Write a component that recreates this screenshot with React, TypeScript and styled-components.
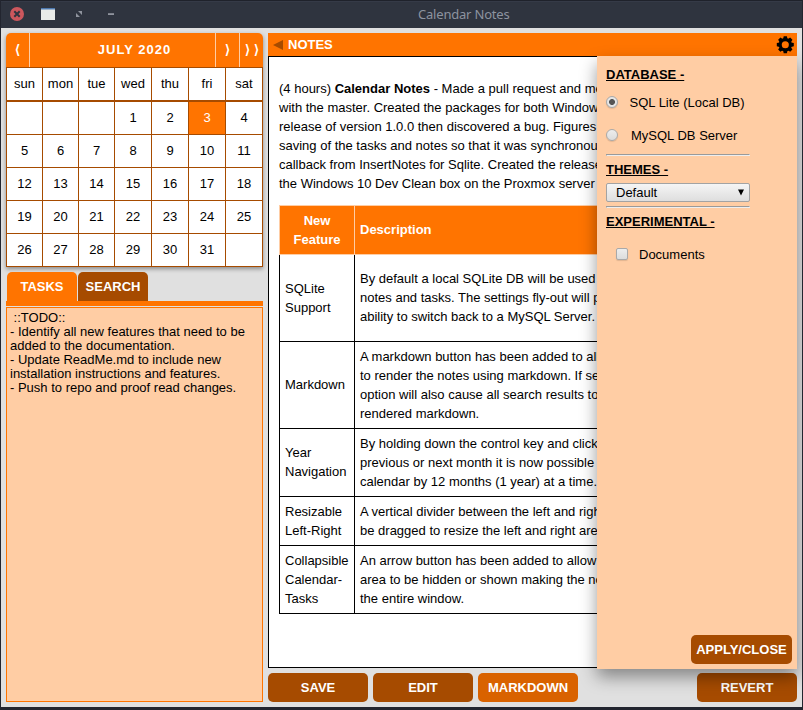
import React from "react";
import styled, { createGlobalStyle } from "styled-components";

const ORANGE = "#ff7400";
const BROWN = "#a64b00";
const PEACH = "#ffcda4";

const GlobalStyle = createGlobalStyle`
  * { box-sizing: border-box; }
  body {
    margin: 0;
    overflow: hidden;
    font: 13px/15px "Liberation Sans", Arial, sans-serif;
    color: #000;
  }
`;

const Window = styled.div`
  width: 803px;
  height: 710px;
  display: flex;
  flex-direction: column;
  background: #e0e0e0;
  border: solid #22252f;
  border-width: 0 1px 3px 1px;
  overflow: hidden;
`;

const TitleBar = styled.header`
  height: 28px;
  flex: none;
  display: grid;
  grid-template-columns: 124px 1fr;
  align-items: center;
  background: #2f343f;
  border-top: 1px solid #1f222b;
  box-shadow: inset 0 1px #353a47;
`;

const WindowControls = styled.svg`
  display: block;
  width: 124px;
  height: 27px;
`;

const WindowTitle = styled.div`
  font: 13px/27px "Noto Sans", sans-serif;
  letter-spacing: -0.2px;
  color: #8d939f;
  padding-left: 293px;
  white-space: nowrap;
`;

const Body = styled.div`
  flex: 1;
  min-height: 0;
  display: grid;
  grid-template-columns: 257px 529px;
  gap: 5px;
  padding: 5px;
`;

const Sidebar = styled.aside`
  display: flex;
  flex-direction: column;
  min-height: 0;
`;

const Calendar = styled.section`
  height: 234px;
  flex: none;
  border-radius: 5px 5px 0 0;
  box-shadow: 0 2px 4px rgba(0, 0, 0, 0.38);
`;

const CalendarHeader = styled.div`
  display: grid;
  grid-template-columns: 23px 1fr 24px 24px;
  height: 34px;
  line-height: 33px;
  background: ${ORANGE};
  color: #fff;
  font-weight: bold;
  text-align: center;
  border-radius: 5px 5px 0 0;
`;

const MonthLabel = styled.div`
  letter-spacing: 1px;
  padding-left: 24px;
  border-left: 1px solid ${PEACH};
`;

const NavButton = styled.div<{ $divided?: boolean; $double?: boolean }>`
  border-left: ${(p) => (p.$divided ? `1px solid ${PEACH}` : "none")};
  letter-spacing: ${(p) => (p.$double ? "4px" : "normal")};
  padding-left: ${(p) => (p.$double ? "4px" : "0")};
  white-space: nowrap;
`;

const DayGrid = styled.div`
  display: grid;
  grid-template-columns: repeat(3, 35px) repeat(4, 36px);
  grid-template-rows: 33px repeat(5, 32px);
  gap: 1px;
  padding: 1px;
  background: ${BROWN};
`;

const Day = styled.div<{ $today?: boolean; $heading?: boolean }>`
  background: ${(p) => (p.$today ? ORANGE : "#fff")};
  color: ${(p) => (p.$today ? "#fff" : "#000")};
  border-bottom: ${(p) => (p.$heading ? `1px solid ${BROWN}` : "none")};
  line-height: 32px;
  text-align: center;
`;

const Tabs = styled.nav`
  display: flex;
  gap: 1px;
  height: 34px;
  flex: none;
  margin-top: 5px;
  padding-left: 1px;
  border-bottom: 5px solid ${ORANGE};
`;

const Tab = styled.div<{ $active?: boolean }>`
  width: 70px;
  height: 29px;
  line-height: 29px;
  border-radius: 5px 5px 0 0;
  text-align: center;
  font-weight: bold;
  color: #fff;
  background: ${(p) => (p.$active ? ORANGE : BROWN)};
`;

const TaskArea = styled.div`
  flex: 1;
  margin-top: 1px;
  padding: 3px;
  border: 1px solid ${ORANGE};
  background: ${PEACH};
  line-height: 14px;
  white-space: pre;
`;

const Main = styled.main`
  position: relative;
  display: flex;
  flex-direction: column;
  min-height: 0;
`;

const NotesHeader = styled.div`
  height: 23px;
  flex: none;
  display: flex;
  align-items: center;
  padding: 0 3px 0 5px;
  background: ${ORANGE};
  color: #fff;
  font-weight: bold;
`;

const NotesTitle = styled.span`
  flex: 1;
  padding-left: 5px;
`;

const Icon = styled.svg`
  display: block;
  flex: none;
`;

const NotesBody = styled.article`
  flex: 1;
  min-height: 0;
  overflow: hidden;
  padding: 22px 10px 0;
  border: 1px solid #000;
  background: #fff;
  line-height: 19px;
  white-space: pre;
`;

const NotesTable = styled.table`
  margin-top: 12px;
  width: 600px;
  table-layout: fixed;
  border-collapse: separate;
  border-spacing: 0;
`;

const HeadCell = styled.th<{ $first?: boolean }>`
  width: ${(p) => (p.$first ? "75px" : "auto")};
  height: 50px;
  padding: 0 5px 1px;
  border: solid ${PEACH};
  border-width: 1px 0 1px 1px;
  background: ${ORANGE};
  color: #fff;
  text-align: ${(p) => (p.$first ? "center" : "left")};
`;

const Cell = styled.td<{ $height: number }>`
  height: ${(p) => p.$height}px;
  padding: 0 5px 1px;
  border: solid #000;
  border-width: 0 0 1px 1px;
  vertical-align: middle;
`;

const ButtonRow = styled.footer`
  display: flex;
  gap: 5px;
  flex: none;
  margin-top: 5px;
`;

const Button = styled.button<{ $lit?: boolean; $right?: boolean; $width?: number }>`
  width: ${(p) => p.$width ?? 100}px;
  height: 29px;
  margin: 0;
  margin-left: ${(p) => (p.$right ? "auto" : "0")};
  padding: 0;
  border: 0;
  border-radius: 5px;
  background: ${(p) => (p.$lit ? "#d96200" : BROWN)};
  color: #fff;
  font: bold 13px/29px "Liberation Sans", Arial, sans-serif;
`;

const SettingsPanel = styled.section`
  position: absolute;
  top: 23px;
  right: 0;
  width: 200px;
  height: 613px;
  display: flex;
  flex-direction: column;
  padding: 11px 5px 5px 9px;
  background: ${PEACH};
  box-shadow: 0 8px 16px rgba(0, 0, 0, 0.4);
`;

const Heading = styled.h2`
  margin: 0;
  font-size: 13px;
  line-height: 15px;
  text-decoration: underline;
`;

const Option = styled.label<{ $top: number; $gap: number; $indent?: number }>`
  display: flex;
  align-items: center;
  height: 15px;
  margin-top: ${(p) => p.$top}px;
  padding-left: ${(p) => p.$indent ?? 0}px;
  gap: ${(p) => p.$gap}px;
`;

const Mark = styled.span<{ $square?: boolean; $checked?: boolean }>`
  width: 12px;
  height: 12px;
  margin-bottom: 2px;
  border: 1px solid #a9a9a9;
  border-radius: ${(p) => (p.$square ? "2px" : "50%")};
  background: ${(p) =>
    p.$checked
      ? "radial-gradient(circle, #555 0 2.6px, transparent 3.3px), #e6e6e6"
      : "linear-gradient(#ededed, #dcdcdc)"};
  box-shadow: 0 1px 1px rgba(0, 0, 0, 0.12);
`;

const Rule = styled.hr<{ $top: number; $bottom: number }>`
  width: 144px;
  margin: ${(p) => p.$top}px 0 ${(p) => p.$bottom}px;
  border: solid 1px;
  border-color: #9a9a9a #eee #eee #9a9a9a;
`;

const Select = styled.div`
  display: flex;
  align-items: center;
  justify-content: space-between;
  width: 144px;
  height: 19px;
  margin-top: 6px;
  padding: 0 5px 0 9px;
  border: 1px solid #a3a3a3;
  border-radius: 2px;
  background: linear-gradient(#f5f5f5, #dedede);
`;

const PanelFooter = styled.div`
  display: flex;
  justify-content: flex-end;
  margin-top: auto;
`;

const weekdays = ["sun", "mon", "tue", "wed", "thu", "fri", "sat"];
const days = Array.from({ length: 35 }, (_, i) => (i >= 3 && i < 34 ? i - 2 : null));

const tasks = ` ::TODO::
- Identify all new features that need to be
added to the documentation.
- Update ReadMe.md to include new
installation instructions and features.
- Push to repo and proof read changes.`;

const rows = [
  { height: 87, name: "SQLite\nSupport", text: "By default a local SQLite DB will be used for\nnotes and tasks. The settings fly-out will provide\nability to switch back to a MySQL Server." },
  { height: 87, name: "Markdown", text: "A markdown button has been added to allow\nto render the notes using markdown. If selected\noption will also cause all search results to be\nrendered markdown." },
  { height: 68, name: "Year\nNavigation", text: "By holding down the control key and clicking\nprevious or next month it is now possible to\ncalendar by 12 months (1 year) at a time." },
  { height: 49, name: "Resizable\nLeft-Right", text: "A vertical divider between the left and right\nbe dragged to resize the left and right areas." },
  { height: 68, name: "Collapsible\nCalendar-\nTasks", text: "An arrow button has been added to allow the\narea to be hidden or shown making the notes\nthe entire window." },
];

const GearIcon = () => (
  <Icon width="18" height="18" viewBox="-9.3 -8.7 18 18">
    <circle r="5.1" fill="none" stroke="#000" strokeWidth="3.1" />
    {[0, 45, 90, 135, 180, 225, 270, 315].map((a) => (
      <path key={a} d="M-2.2-5.8 L-1.6-8.5 H1.6 L2.2-5.8Z" transform={`rotate(${a})`} />
    ))}
  </Icon>
);

export default function App() {
  return (
    <>
      <GlobalStyle />
      <Window>
        <TitleBar>
          <WindowControls viewBox="1 1 124 27">
            <circle cx="17" cy="14" r="7" fill="#cc575d" />
            <path d="M14.3 11.3l5.4 5.4M19.7 11.3l-5.4 5.4" stroke="#2f343f" strokeWidth="2" />
            <path d="M41 8h14v12H41z" fill="#e9ebe8" />
            <path d="M41 8h14v1.5H41z" fill="#4d79b0" />
            <path d="M78 11h4v4zM76 13v4h4z" fill="#90949e" />
            <path d="M108 13.2h6v1.8h-6z" fill="#90949e" />
          </WindowControls>
          <WindowTitle>Calendar Notes</WindowTitle>
        </TitleBar>
        <Body>
          <Sidebar>
            <Calendar>
              <CalendarHeader>
                <NavButton>⟨</NavButton>
                <MonthLabel>JULY 2020</MonthLabel>
                <NavButton $divided>⟩</NavButton>
                <NavButton $divided $double>⟩⟩</NavButton>
              </CalendarHeader>
              <DayGrid>
                {weekdays.map((d) => (
                  <Day key={d} $heading>{d}</Day>
                ))}
                {days.map((d, i) => (
                  <Day key={i} $today={d === 3}>{d}</Day>
                ))}
              </DayGrid>
            </Calendar>
            <Tabs>
              <Tab $active>TASKS</Tab>
              <Tab>SEARCH</Tab>
            </Tabs>
            <TaskArea>{tasks}</TaskArea>
          </Sidebar>
          <Main>
            <NotesHeader>
              <Icon width="10" height="10" viewBox="0 0 10 10">
                <path d="M0 5L10 0V10Z" fill={BROWN} />
              </Icon>
              <NotesTitle>NOTES</NotesTitle>
              <GearIcon />
            </NotesHeader>
            <NotesBody>
              <div>
                (4 hours) <b>Calendar Notes</b>
                {` - Made a pull request and merged
with the master. Created the packages for both Windows
release of version 1.0.0 then discovered a bug. Figures
saving of the tasks and notes so that it was synchronous
callback from InsertNotes for Sqlite. Created the release
the Windows 10 Dev Clean box on the Proxmox server`}
              </div>
              <NotesTable>
                <thead>
                  <tr>
                    <HeadCell $first>{"New\nFeature"}</HeadCell>
                    <HeadCell>Description</HeadCell>
                  </tr>
                </thead>
                <tbody>
                  {rows.map((r) => (
                    <tr key={r.name}>
                      <Cell $height={r.height}>{r.name}</Cell>
                      <Cell $height={r.height}>{r.text}</Cell>
                    </tr>
                  ))}
                </tbody>
              </NotesTable>
            </NotesBody>
            <ButtonRow>
              <Button>SAVE</Button>
              <Button>EDIT</Button>
              <Button $lit>MARKDOWN</Button>
              <Button $right>REVERT</Button>
            </ButtonRow>
            <SettingsPanel>
              <Heading>DATABASE -</Heading>
              <Option $top={13} $gap={11.5}><Mark $checked />SQL Lite (Local DB)</Option>
              <Option $top={18} $gap={13}><Mark />MySQL DB Server</Option>
              <Rule $top={11} $bottom={6} />
              <Heading>THEMES -</Heading>
              <Select>
                Default
                <Icon width="6" height="8" viewBox="0 0 6 8">
                  <path d="M0 0.5H6L3 6.5Z" />
                </Icon>
              </Select>
              <Rule $top={4} $bottom={6} />
              <Heading>EXPERIMENTAL -</Heading>
              <Option $top={18} $gap={11} $indent={10}><Mark $square />Documents</Option>
              <PanelFooter>
                <Button $width={101}>APPLY/CLOSE</Button>
              </PanelFooter>
            </SettingsPanel>
          </Main>
        </Body>
      </Window>
    </>
  );
}
